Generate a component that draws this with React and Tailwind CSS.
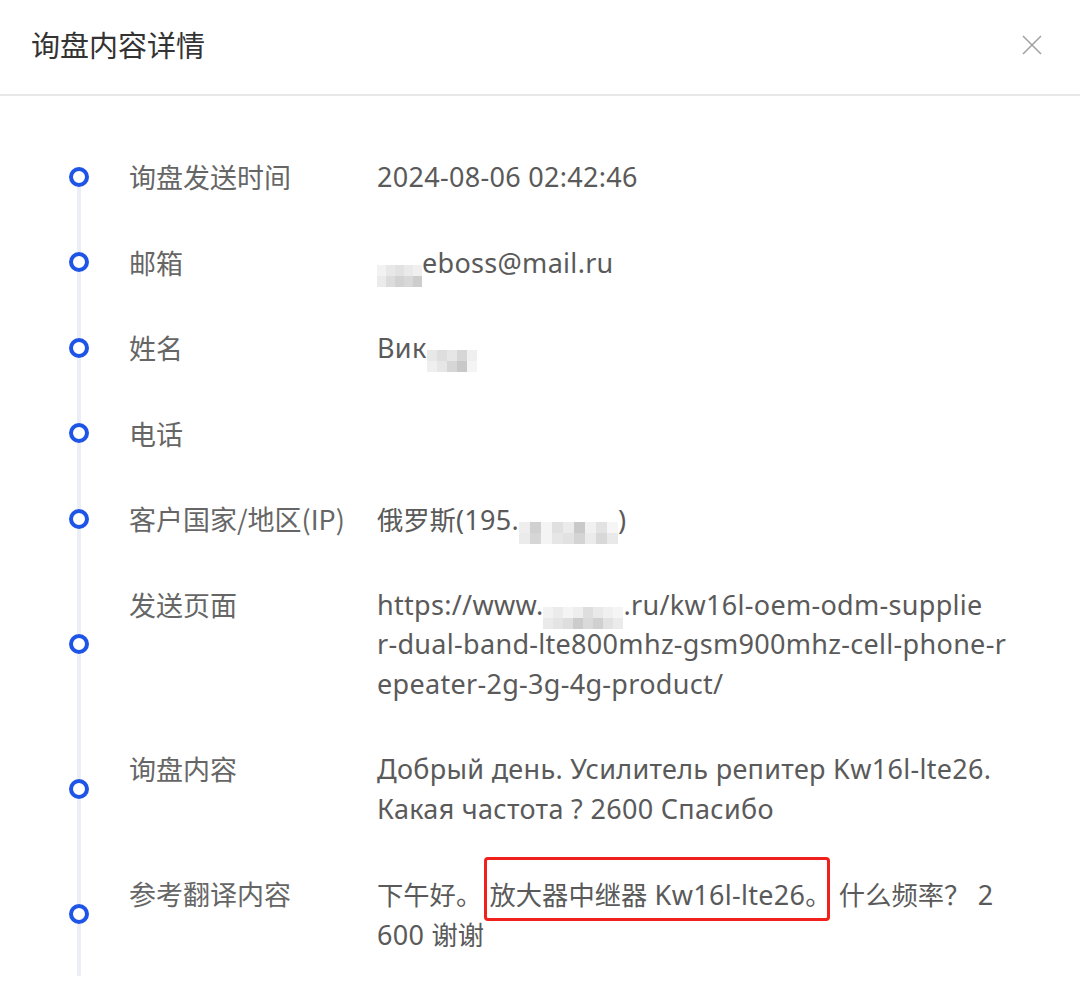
import React from "react";

const FONT = { fontFamily: '"Noto Sans", "Noto Sans CJK SC", sans-serif' };
const CJK = { fontFamily: '"Noto Sans CJK SC", "Noto Sans", sans-serif' };

function Mosaic({ cells, cell = 9 }) {
  return (
    <span className="inline-flex align-[-3px]">
      {cells.map((c, i) => (
        <span key={i} className="flex flex-col">
          {c.map((col, j) => (
            <span key={j} className="block" style={{ width: cell, height: 11, background: col }} />
          ))}
        </span>
      ))}
    </span>
  );
}

function C({ children }) {
  return (
    <span className="text-[26.3px] tracking-normal" style={CJK}>
      {children}
    </span>
  );
}

const rows = [
  { label: "询盘发送时间", lines: [<>2024-08-06 02:42:46</>] },
  {
    label: "邮箱",
    lines: [
      <>
        <Mosaic
          cells={[
            ["#f2f2f2", "#ebebeb"],
            ["#e8e8e8", "#dcdcdc"],
            ["#e2e2e2", "#d2d2d2"],
            ["#eaeaea", "#d8d8d8"],
            ["#f0f0f0", "#cdcdcd"],
          ]}
        />
        eboss@mail.ru
      </>,
    ],
  },
  {
    label: "姓名",
    lines: [
      <>
        Вик
        <Mosaic
          cells={[
            ["#e8e8e8", "#efefef"],
            ["#dedede", "#e6e6e6"],
            ["#e6e6e6", "#d6d6d6"],
            ["#d6d6d6", "#c8c8c8"],
            ["#efefef", "#f4f4f4"],
          ]}
          cell={10}
        />
      </>,
    ],
  },
  { label: "电话", lines: [<>&nbsp;</>] },
  {
    label: "客户国家/地区(IP)",
    lines: [
      <>
        <C>俄罗斯</C>(195.
        <Mosaic
          cells={[
            ["#eeeeee", "#ebebeb"],
            ["#d0d0d0", "#d6d6d6"],
            ["#f4f4f4", "#f4f4f4"],
            ["#e0e0e0", "#e6e6e6"],
            ["#ebebeb", "#e2e2e2"],
            ["#c9c9c9", "#d4d4d4"],
            ["#f1f1f1", "#ebebeb"],
            ["#e2e2e2", "#d8d8d8"],
            ["#f6f6f6", "#e9e9e9"],
          ]}
          cell={11}
        />
        )
      </>,
    ],
  },
  {
    label: "发送页面",
    lines: [
      <>
        https://www.
        <Mosaic
          cells={[
            ["#f2f2f2", "#eaeaea"],
            ["#ebebeb", "#e4e4e4"],
            ["#f4f4f4", "#dedede"],
            ["#eeeeee", "#cccccc"],
            ["#dedede", "#dadada"],
            ["#e9e9e9", "#d0d0d0"],
            ["#f0f0f0", "#e2e2e2"],
            ["#f5f5f5", "#ebebeb"],
          ]}
          cell={10}
        />
        .ru/kw16l-oem-odm-supplie
      </>,
      <>r-dual-band-lte800mhz-gsm900mhz-cell-phone-r</>,
      <>epeater-2g-3g-4g-product/</>,
    ],
  },
  {
    label: "询盘内容",
    lines: [<>Добрый день. Усилитель репитер Kw16l-lte26.</>, <>Какая частота ? 2600 Спасибо</>],
  },
  {
    label: "参考翻译内容",
    lines: [
      <>
        <C>下午好。</C>{" "}
        <span className="relative">
          <C>放大器中继器</C> Kw16l-lte26<C>。</C>
          <span className="pointer-events-none absolute -left-[6px] right-[2px] -top-[19px] -bottom-[8px] rounded-[4px] border-[3px] border-[#f0201c]" />
        </span>{" "}
        <C>什么频率？</C> 2
      </>,
      <>
        600 <C>谢谢</C>
      </>,
    ],
  },
];

export default function App() {
  return (
    <div className="min-h-[999px] w-[1080px] bg-white" style={FONT}>
      <div className="flex h-[96px] items-center justify-between border-b-2 border-[#e8e8e8] pb-[6px] pl-[31px] pr-[38px]">
        <h1 className="text-[29px] leading-[40px] text-[#333333]" style={CJK}>
          询盘内容详情
        </h1>
        <svg width="20" height="20" viewBox="0 0 20 20" className="mt-[2px]">
          <path d="M1 1 L19 19 M19 1 L1 19" stroke="#a0a0a0" strokeWidth="1.5" fill="none" />
        </svg>
      </div>
      <div className="pl-[59px] pt-[38px]">
        {rows.map((r, i) => (
          <div key={i} className="flex">
            <div className="flex w-[40px] flex-col items-center">
              <div className={"w-[4px] flex-1 " + (i === 0 ? "bg-transparent" : "bg-[#eceef5]")} />
              <div className="h-[20px] w-[20px] shrink-0 rounded-full border-[4px] border-[#1f55e6] bg-white" />
              <div className="w-[4px] flex-1 bg-[#eceef5]" />
            </div>
            <div className="ml-[30px] w-[248px] shrink-0 py-[23px] text-[27px] text-[#666666]" style={CJK}>
              <div className="h-[39.5px] leading-[39.5px]">{r.label}</div>
            </div>
            <div className="py-[23px] text-[27px] tracking-[0.3px] text-[#5a5a5a]">
              {r.lines.map((l, j) => (
                <div key={j} className="h-[39.5px] whitespace-nowrap leading-[39.5px]">
                  {l}
                </div>
              ))}
            </div>
          </div>
        ))}
      </div>
    </div>
  );
}
